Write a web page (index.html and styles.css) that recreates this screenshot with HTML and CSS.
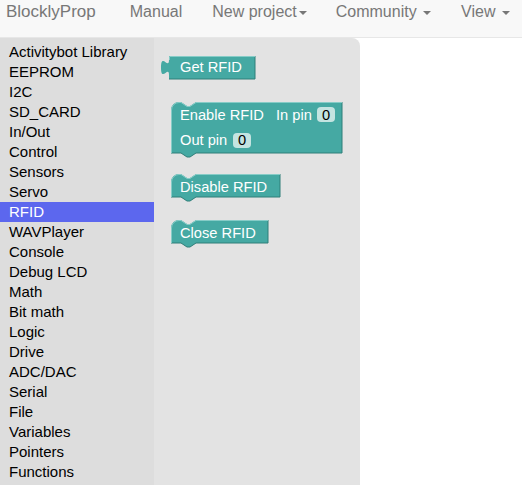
FILE: index.html
```html
<!DOCTYPE html>
<html>
<head>
<meta charset="utf-8">
<link rel="stylesheet" href="styles.css">
</head>
<body>
<div class="navbar">
  <span class="brand">BlocklyProp</span>
  <span class="nav-link l-manual">Manual</span>
  <span class="nav-link l-new">New project<span class="caret"></span></span>
  <span class="nav-link l-comm">Community <span class="caret"></span></span>
  <span class="nav-link l-view">View <span class="caret"></span></span>
</div>
<div class="main">
  <ul class="toolbox">
    <li>Activitybot Library</li>
    <li>EEPROM</li>
    <li>I2C</li>
    <li>SD_CARD</li>
    <li>In/Out</li>
    <li>Control</li>
    <li>Sensors</li>
    <li>Servo</li>
    <li class="selected">RFID</li>
    <li>WAVPlayer</li>
    <li>Console</li>
    <li>Debug LCD</li>
    <li>Math</li>
    <li>Bit math</li>
    <li>Logic</li>
    <li>Drive</li>
    <li>ADC/DAC</li>
    <li>Serial</li>
    <li>File</li>
    <li>Variables</li>
    <li>Pointers</li>
    <li>Functions</li>
  </ul>
  <div class="flyout">
    <svg class="block b-get" width="96" height="26" viewBox="0 0 96 26">
      <path class="body" d="M8,1 H94 V24 H8 V20 c0,-10 -8,8 -8,-7.5 s8,2.5 8,-7.5 Z"/>
      <path class="shade" d="M94,1 V24 H8"/>
      <path class="hl" d="M8.5,5 V1.5 H94"/>
      <text x="19" y="17">Get RFID</text>
    </svg>
    <svg class="block b-enable" width="174" height="58" viewBox="0 0 174 58">
      <path class="body" d="M1,9 A8,8 0 0 1 9,1 H11 l6,4 3,0 6,-4 H172 V52 H26 l-6,4 -3,0 -6,-4 H1 Z"/>
      <path class="shade" d="M172,1 V52 H26 l-6,4 -3,0 -6,-4 H1"/>
      <path class="hl" d="M1.5,52 V9 A7.5,7.5 0 0 1 9,1.5 H11 l6,4 3,0 6,-4 H172"/>
      <text x="10" y="18.5">Enable RFID</text>
      <text x="106" y="18.5">In pin</text>
      <rect class="field" x="147" y="6" width="18" height="15" rx="4"/>
      <text class="fval" x="156" y="18.5">0</text>
      <text x="10" y="44">Out pin</text>
      <rect class="field" x="63" y="32" width="18" height="15" rx="4"/>
      <text class="fval" x="72" y="44">0</text>
    </svg>
    <svg class="block b-disable" width="112" height="30" viewBox="0 0 112 30">
      <path class="body" d="M1,9 A8,8 0 0 1 9,1 H11 l6,4 3,0 6,-4 H110 V24 H26 l-6,4 -3,0 -6,-4 H1 Z"/>
      <path class="shade" d="M110,1 V24 H26 l-6,4 -3,0 -6,-4 H1"/>
      <path class="hl" d="M1.5,24 V9 A7.5,7.5 0 0 1 9,1.5 H11 l6,4 3,0 6,-4 H110"/>
      <text x="10" y="18.5">Disable RFID</text>
    </svg>
    <svg class="block b-close" width="100" height="30" viewBox="0 0 100 30">
      <path class="body" d="M1,9 A8,8 0 0 1 9,1 H11 l6,4 3,0 6,-4 H98 V24 H26 l-6,4 -3,0 -6,-4 H1 Z"/>
      <path class="shade" d="M98,1 V24 H26 l-6,4 -3,0 -6,-4 H1"/>
      <path class="hl" d="M1.5,24 V9 A7.5,7.5 0 0 1 9,1.5 H11 l6,4 3,0 6,-4 H98"/>
      <text x="10" y="18.5">Close RFID</text>
    </svg>
  </div>
  <div class="workspace"></div>
</div>
</body>
</html>
```

FILE: styles.css
```css
html, body {
  margin: 0;
  padding: 0;
  height: 100%;
  overflow: hidden;
  background: #ffffff;
  font-family: "Liberation Sans", Arial, Helvetica, sans-serif;
}

.navbar {
  height: 35px;
  background: #f8f8f8;
  border-bottom: 1px solid #e7e7e7;
  display: flex;
  align-items: flex-start;
  padding-top: 2px;
  box-sizing: content-box;
  white-space: nowrap;
}

.brand {
  font-size: 17px;
  line-height: 20px;
  color: #777777;
  margin-left: 6px;
}

.nav-link {
  font-size: 16px;
  line-height: 20px;
  color: #777777;
}

.l-manual { margin-left: 34px; }
.l-new { margin-left: 30px; }
.l-comm { margin-left: 29px; }
.l-view { margin-left: 30px; }

.caret {
  display: inline-block;
  width: 0;
  height: 0;
  margin-left: 2px;
  vertical-align: middle;
  border-top: 4px solid #777777;
  border-left: 4px solid transparent;
  border-right: 4px solid transparent;
}

.main {
  display: flex;
  height: calc(100% - 38px);
}

.toolbox {
  list-style: none;
  margin: 0;
  padding: 4px 0 0 0;
  width: 154px;
  flex: 0 0 154px;
  background: #dddddd;
  font-size: 15px;
  line-height: 20px;
  color: #000000;
}

.toolbox li {
  height: 20px;
  padding-left: 9px;
  white-space: nowrap;
}

.toolbox li.selected {
  background: #5c67ee;
  color: #ffffff;
}

.flyout {
  position: relative;
  width: 206px;
  flex: 0 0 206px;
  background: #e3e3e3;
  border-top-right-radius: 8px;
}

.workspace {
  flex: 1;
  background: #ffffff;
}

.block {
  position: absolute;
  display: block;
  overflow: visible;
}

.b-get { left: 7px; top: 17px; }
.b-enable { left: 16px; top: 63px; }
.b-disable { left: 16px; top: 135px; }
.b-close { left: 16px; top: 181px; }

.block .body {
  fill: #45a9a3;
}

.block .shade {
  fill: none;
  stroke: #2f7e79;
  stroke-width: 1;
}

.block .hl {
  fill: none;
  stroke: #86ccc7;
  stroke-width: 1;
}

.block text {
  fill: #ffffff;
  font-family: "Liberation Sans", Arial, Helvetica, sans-serif;
  font-size: 14.67px;
}

.block .field {
  fill: #c4e4e1;
}

.block text.fval {
  fill: #000000;
  text-anchor: middle;
}
```
